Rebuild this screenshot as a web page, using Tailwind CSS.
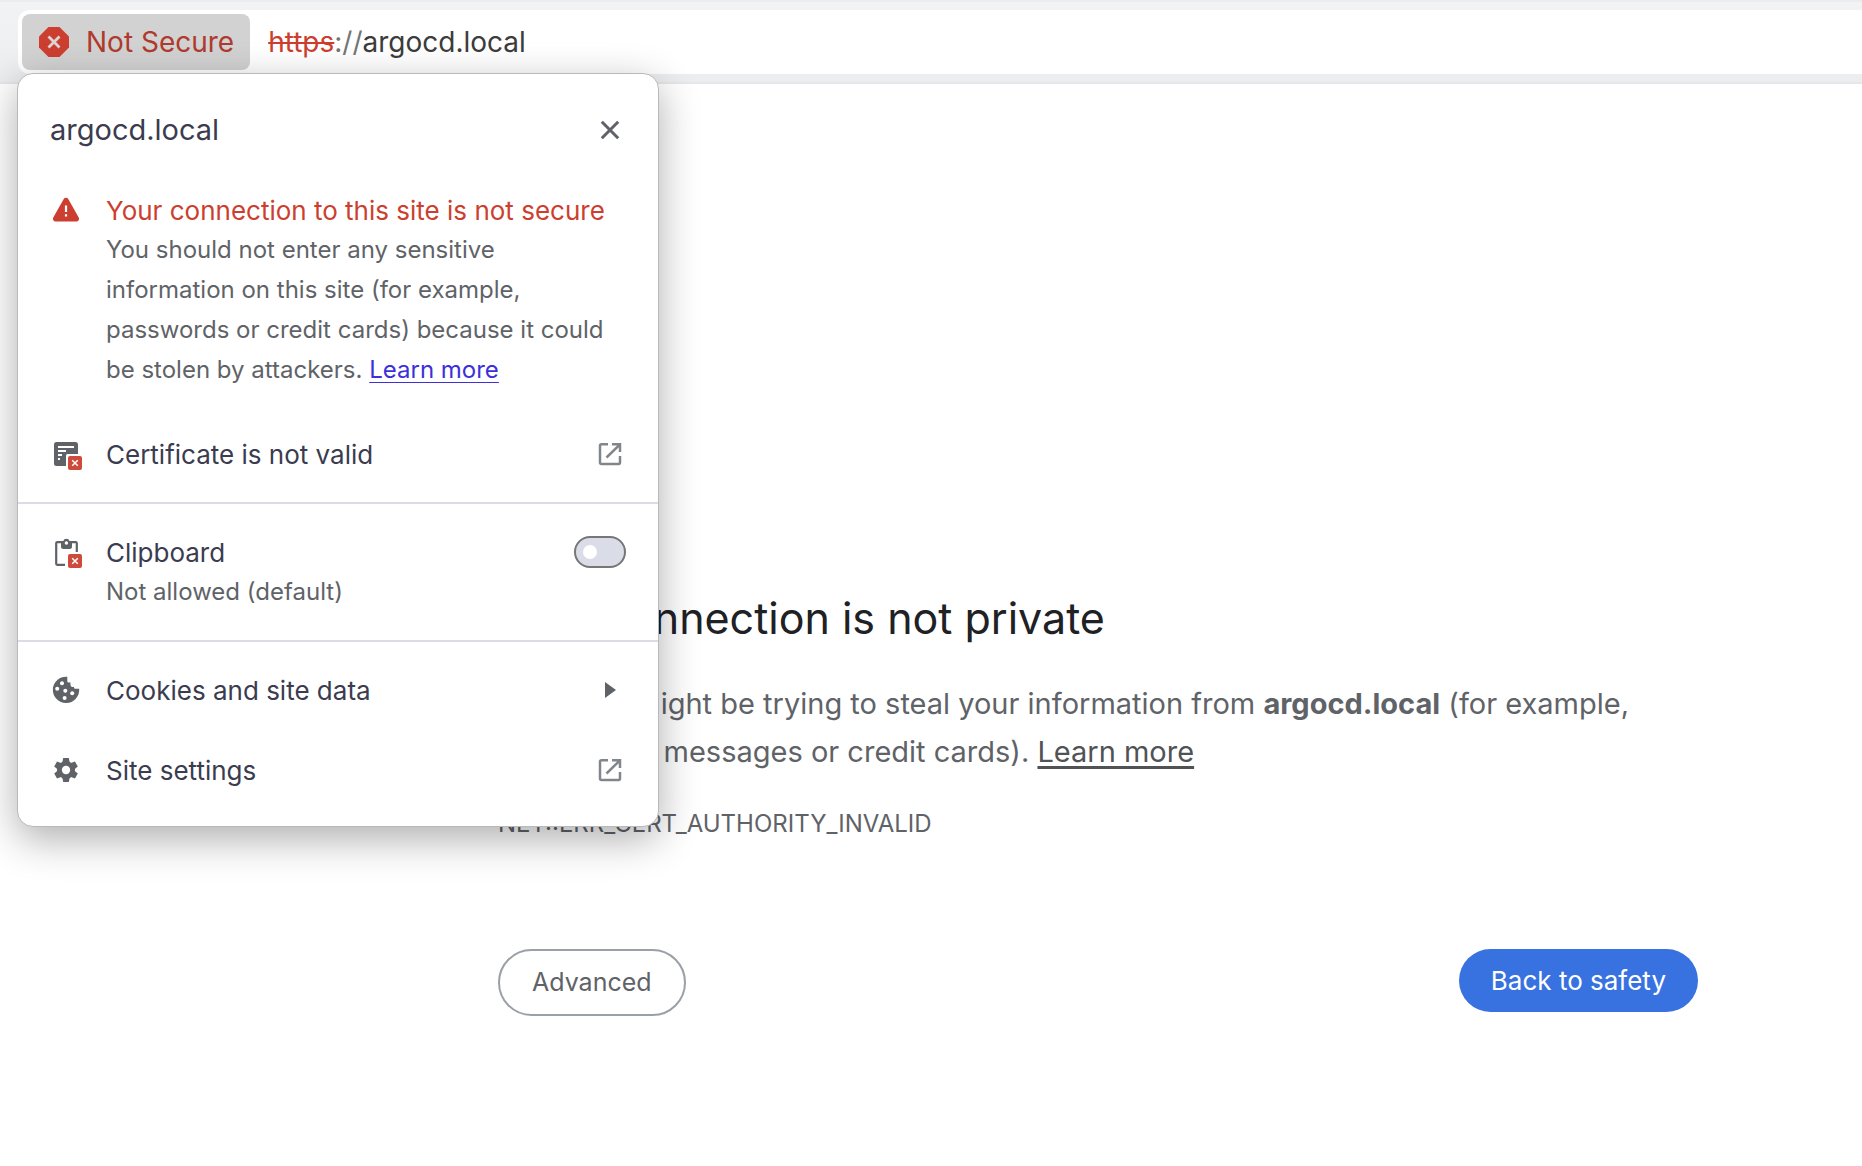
<!DOCTYPE html>
<html lang="en">
<head>
    <meta charset="UTF-8">
    <meta name="viewport" content="width=device-width, initial-scale=1.0">
    <title>Privacy error</title>
    <script src="https://cdn.jsdelivr.net/npm/@tailwindcss/browser@4"></script>
</head>
<body class="relative min-h-screen overflow-x-hidden bg-white font-['Inter','Liberation_Sans',sans-serif] text-[#5f6368]">
    <!-- Shared icons -->
    <svg class="hidden" aria-hidden="true">
        <symbol id="icon-open" viewBox="0 0 32 32">
            <path d="M14 6.300H7.500a1.500 1.500 0 0 0-1.500 1.500V24.500a1.500 1.500 0 0 0 1.500 1.500H24.500a1.500 1.500 0 0 0 1.500-1.500V18M18 6.300H26V14M25.500 6.800L12.500 19.500" fill="none" stroke="#80868b" stroke-width="2.500"/>
        </symbol>
        <symbol id="icon-blocked" viewBox="0 0 14 14">
            <rect width="14" height="14" rx="2" fill="#cc4b3b"/>
            <path d="M4.200 4.200l5.600 5.600M9.800 4.200l-5.600 5.600" stroke="#fff" stroke-width="1.500"/>
        </symbol>
    </svg>

    <!-- Toolbar -->
    <header class="border-t-2 border-b-2 border-t-[#ebecee] border-b-[#e6e7e9] bg-linear-to-b from-[#f1f3f5] to-[#ecedef] pt-2 pb-2 pl-[18px]">
        <div class="flex h-16 items-center gap-[18px] rounded-l-xl bg-white pl-1 text-[28px] leading-10">
            <button type="button" class="flex h-14 items-center gap-4 rounded-lg bg-[#d2d2d2] px-4 text-[#b03a2e]">
                <svg class="size-8" viewBox="0 0 32 32" aria-hidden="true">
                    <path d="M10.500 1h11L31 10.500v11L21.500 31h-11L1 21.500v-11z" fill="#cc3f30"/>
                    <path d="M10.500 10.500l11 11M21.500 10.500L10.500 21.500" stroke="#dcd5d4" stroke-width="2.800"/>
                </svg>
                <span>Not Secure</span>
            </button>
            <div role="textbox" aria-label="Address" contenteditable="true" spellcheck="false" class="flex-1 whitespace-nowrap text-[#3c3c3c] outline-none"><span class="text-[#cc3f30] line-through decoration-2">https</span><span class="text-[#757575]">://</span>argocd.local</div>
        </div>
    </header>

    <!-- Interstitial -->
    <main class="max-w-[1698px] pt-[508px] pl-[498px]">
        <h1 class="text-[43px] leading-[52px] text-[#202124]">Your connection is not private</h1>
        <p class="mt-9 text-[29px] leading-12">Attackers might be trying to steal your information from <strong class="font-bold">argocd.local</strong> (for example, passwords, messages or credit cards). <a href="#" class="text-[#505356] underline decoration-3 underline-offset-4">Learn more</a></p>
        <p class="mt-7 text-2xl leading-10">NET::ERR_CERT_AUTHORITY_INVALID</p>
        <div class="mt-[105px] flex items-start justify-between">
            <button type="button" class="h-[67px] rounded-full border-2 border-[#9aa0a6] px-8 text-[25px]">Advanced</button>
            <button type="button" class="h-[63px] rounded-full bg-[#3871e0] px-8 text-[26px] text-white">Back to safety</button>
        </div>
    </main>

    <!-- Page info bubble -->
    <section aria-label="Site information" class="absolute top-[73px] left-[17px] w-[642px] rounded-2xl border border-[#b9b9b9] bg-white pb-4 text-[26px] leading-10 text-[#3b3c4f] shadow-[0_12px_40px_rgba(0,0,0,0.32)]">
        <div class="flex items-center justify-between px-8 pt-9">
            <h2 class="text-[29px]">argocd.local</h2>
            <button type="button" aria-label="Close" class="size-8">
                <svg class="size-8" viewBox="0 0 32 32" aria-hidden="true"><path d="M7.800 7.800l16.400 16.400M24.200 7.800L7.800 24.200" stroke="#5f6368" stroke-width="3"/></svg>
            </button>
        </div>

        <div class="mt-[42px] flex gap-6 px-8">
            <svg class="mt-0.5 size-8 shrink-0" viewBox="0 0 32 32" aria-hidden="true">
                <path d="M13.600 5.200a2.700 2.700 0 0 1 4.800 0L28.700 23.600a2.700 2.700 0 0 1-2.300 4H5.600a2.700 2.700 0 0 1-2.300-4z" fill="#cc3f30"/>
                <path d="M16 11.500v6.500M16 20.200v2.400" stroke="#fff" stroke-width="2.200"/>
            </svg>
            <div>
                <h3 class="leading-[38px] text-[#cc3f30]">Your connection to this site is not secure</h3>
                <p class="text-2xl leading-10 text-[#5f6368]">You should not enter any sensitive information on this site (for example, passwords or credit cards) because it could be stolen by attackers. <a href="#" class="text-[#3b30dc] underline decoration-1 underline-offset-4">Learn more</a></p>
            </div>
        </div>

        <button type="button" class="mt-6 mb-2 flex h-20 w-full items-center gap-6 px-8 text-left">
            <svg class="size-8" viewBox="0 0 32 32" aria-hidden="true">
                <path d="M6.500 4h19A2.500 2.500 0 0 1 28 6.500V16H17.500a1.500 1.500 0 0 0-1.500 1.500V28H6.500A2.500 2.500 0 0 1 4 25.500v-19A2.500 2.500 0 0 1 6.500 4z" fill="#5f6368"/>
                <path d="M8 9h16M8 13h8M8 17h4M8 21h2" stroke="#fff" stroke-width="2"/>
                <use href="#icon-blocked" x="18" y="18" width="14" height="14"/>
            </svg>
            <span class="flex-1 pt-0.5">Certificate is not valid</span>
            <svg class="size-8" aria-hidden="true"><use href="#icon-open"/></svg>
        </button>

        <div class="flex gap-6 border-y-2 border-[#dcdce4] px-8 py-7">
            <svg class="mt-1 size-8 shrink-0" viewBox="0 0 32 32" aria-hidden="true">
                <path d="M15 28.800H7.200a1 1 0 0 1-1-1V7.200a1 1 0 0 1 1-1H25.800a1 1 0 0 1 1 1V16" fill="none" stroke="#5f6368" stroke-width="2.200"/>
                <path d="M11 5.200h2.200a3.300 3.300 0 0 1 6.400 0H22V10.500a2.500 2.500 0 0 1-2.500 2.500h-6A2.500 2.500 0 0 1 11 10.500z" fill="#5f6368"/>
                <circle cx="16.400" cy="7" r="1.700" fill="#fff"/>
                <use href="#icon-blocked" x="18" y="18" width="14" height="14"/>
            </svg>
            <div class="flex-1">
                <label for="clipboard" class="block pt-0.5 leading-[38px]">Clipboard</label>
                <p class="text-2xl leading-10 text-[#5f6368]">Not allowed (default)</p>
            </div>
            <input id="clipboard" type="checkbox" role="switch" class="mt-1 h-8 w-[52px] appearance-none rounded-full border-2 border-[#757775] bg-[#dadce8] before:mt-[7px] before:ml-[7px] before:block before:size-[14px] before:rounded-full before:bg-white checked:before:ml-[27px]">
        </div>

        <button type="button" class="mt-2 flex h-20 w-full items-center gap-6 px-8 text-left">
            <svg class="size-8" viewBox="0 0 32 32" aria-hidden="true">
                <path d="M17.300 2.700V7.300a1.200 1.200 0 0 0 1.200 1.200h2V11a2 2 0 0 0 2 2h1.500v.600a1.200 1.200 0 0 0 1.200 1.200H29.200A13.200 13.200 0 1 1 17.300 2.700z" fill="#5f6368"/>
                <g fill="#fff"><circle cx="12" cy="9.300" r="2"/><circle cx="7.200" cy="14.700" r="2"/><circle cx="15.300" cy="16.700" r="2"/><circle cx="22.200" cy="19.300" r="2"/><circle cx="14.600" cy="24" r="2"/></g>
            </svg>
            <span class="flex-1 pt-0.5">Cookies and site data</span>
            <svg class="size-8" viewBox="0 0 32 32" aria-hidden="true"><path d="M11 8l11 8-11 8z" fill="#5f6368"/></svg>
        </button>

        <button type="button" class="flex h-20 w-full items-center gap-6 px-8 text-left">
            <svg class="size-8" viewBox="0 0 32 32" aria-hidden="true">
                <g fill="#5f6368">
                    <circle cx="16" cy="16" r="9"/>
                    <path id="teeth" d="M13.200 4h5.600l1 5v14l-1 5h-5.600l-1-5V9z"/>
                    <use href="#teeth" transform="rotate(60 16 16)"/>
                    <use href="#teeth" transform="rotate(120 16 16)"/>
                </g>
                <circle cx="16" cy="16" r="4.200" fill="#fff"/>
            </svg>
            <span class="flex-1 pt-0.5">Site settings</span>
            <svg class="size-8" aria-hidden="true"><use href="#icon-open"/></svg>
        </button>
    </section>
</body>
</html>
